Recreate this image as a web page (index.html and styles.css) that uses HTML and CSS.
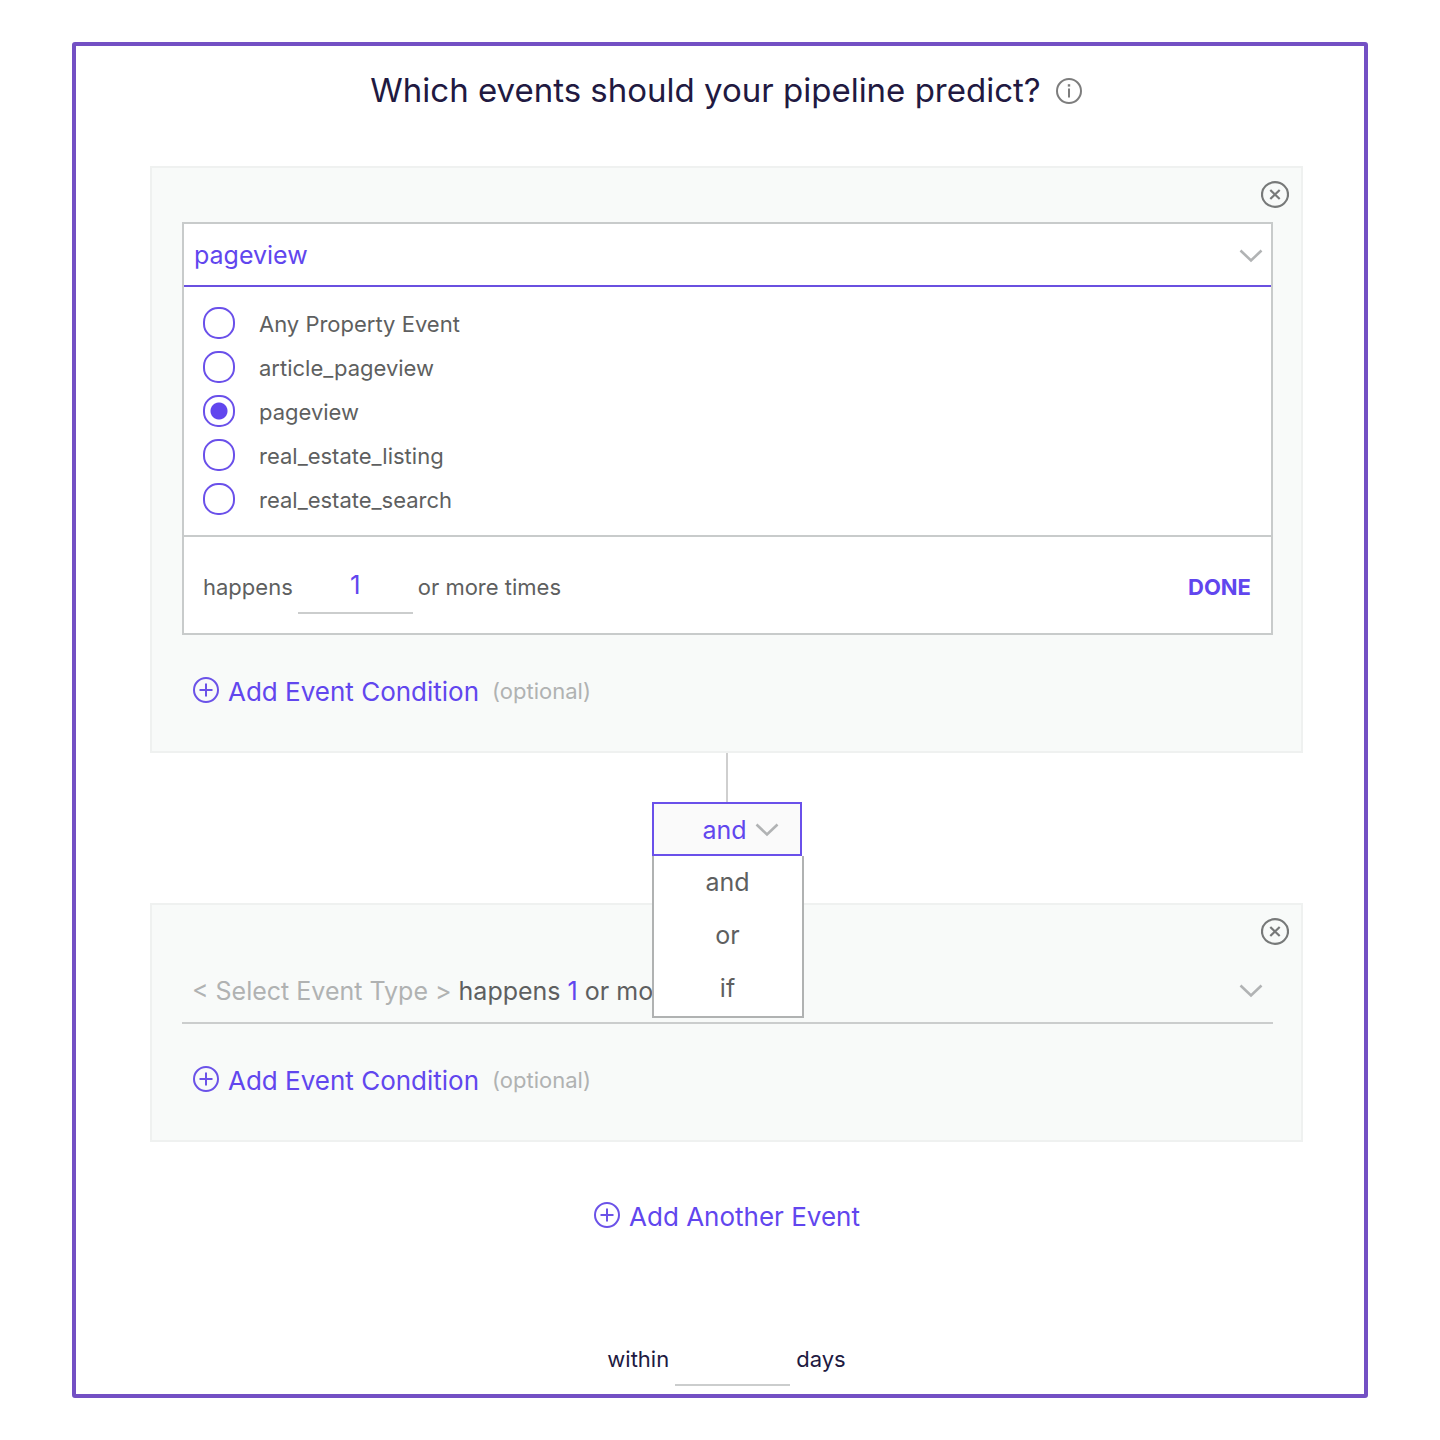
FILE: index.html
```
<!DOCTYPE html>
<html lang="en">
<head>
    <meta charset="UTF-8">
    <meta name="viewport" content="width=device-width, initial-scale=1.0">
    <title>Pipeline Events</title>
    <link rel="stylesheet" href="styles.css">
</head>
<body>
    <main class="frame">
        <div class="title-row">
            <h1>Which events should your pipeline predict?</h1>
            <button class="icon-btn" type="button" aria-label="More info">
                <svg width="28" height="28" viewBox="0 0 28 28" fill="none" stroke="#7d7d7d">
                    <circle cx="14" cy="15" r="12" stroke-width="2"/>
                    <path d="M14 12.5V21.5" stroke-width="2"/>
                    <path d="M14 8.2V10.6" stroke-width="2.4"/>
                </svg>
            </button>
        </div>

        <section class="card">
            <div class="card-head">
                <button class="icon-btn" type="button" aria-label="Remove event">
                    <svg width="28" height="28" viewBox="0 0 28 28" fill="none" stroke="#777979" stroke-width="2.2">
                        <ellipse cx="14" cy="14.5" rx="13" ry="12.3"/>
                        <path d="M9.3 10L18.7 19M18.7 10L9.3 19"/>
                    </svg>
                </button>
            </div>
            <div class="card-body">
                <div class="picker">
                    <div class="select-wrap">
                        <select class="event-select" aria-label="Event type">
                            <option>Any Property Event</option>
                            <option>article_pageview</option>
                            <option selected>pageview</option>
                            <option>real_estate_listing</option>
                            <option>real_estate_search</option>
                        </select>
                        <svg class="chevron" width="24" height="14" viewBox="0 0 24 14" fill="none" stroke="#b1b3b4" stroke-width="2.6">
                            <path d="M1.5 1.5L12 11.5L22.5 1.5"/>
                        </svg>
                    </div>
                    <div class="options">
                        <label class="option"><input type="radio" name="event">Any Property Event</label>
                        <label class="option"><input type="radio" name="event">article_pageview</label>
                        <label class="option"><input type="radio" name="event" checked>pageview</label>
                        <label class="option"><input type="radio" name="event">real_estate_listing</label>
                        <label class="option"><input type="radio" name="event">real_estate_search</label>
                    </div>
                    <div class="picker-footer">
                        <label for="times">happens</label>
                        <input class="number-input" id="times" type="text" inputmode="numeric" value="1">
                        <span>or more times</span>
                        <button class="done-btn" type="button">DONE</button>
                    </div>
                </div>
                <div class="add-row">
                    <button class="add-btn" type="button">
                        <svg width="28" height="28" viewBox="0 0 28 28" fill="none" stroke="#6b52e8" stroke-width="2">
                            <circle cx="14" cy="14" r="12"/>
                            <path d="M14 7.5V20.5M7.5 14H20.5"/>
                        </svg>
                        Add Event Condition
                    </button>
                    <span class="optional">(optional)</span>
                </div>
            </div>
        </section>

        <div class="connector">
            <div class="operator">
                <button class="operator-btn" type="button" aria-haspopup="listbox" aria-expanded="true">
                    and
                    <svg width="24" height="14" viewBox="0 0 24 14" fill="none" stroke="#b1b3b4" stroke-width="2.6">
                        <path d="M1.5 1.5L12 11.5L22.5 1.5"/>
                    </svg>
                </button>
                <ul class="operator-menu" role="listbox" aria-label="Operator">
                    <li role="option" aria-selected="true">and</li>
                    <li role="option" aria-selected="false">or</li>
                    <li role="option" aria-selected="false">if</li>
                </ul>
            </div>
        </div>

        <section class="card">
            <div class="card-head">
                <button class="icon-btn" type="button" aria-label="Remove event">
                    <svg width="28" height="28" viewBox="0 0 28 28" fill="none" stroke="#777979" stroke-width="2.2">
                        <ellipse cx="14" cy="14.5" rx="13" ry="12.3"/>
                        <path d="M9.3 10L18.7 19M18.7 10L9.3 19"/>
                    </svg>
                </button>
            </div>
            <div class="card-body">
                <button class="event-field" type="button" aria-haspopup="listbox">
                    <span><span class="placeholder">&lt; Select Event Type &gt;</span> happens <span class="count">1</span> or more times</span>
                    <svg width="24" height="14" viewBox="0 0 24 14" fill="none" stroke="#b1b3b4" stroke-width="2.6">
                        <path d="M1.5 1.5L12 11.5L22.5 1.5"/>
                    </svg>
                </button>
                <div class="add-row">
                    <button class="add-btn" type="button">
                        <svg width="28" height="28" viewBox="0 0 28 28" fill="none" stroke="#6b52e8" stroke-width="2">
                            <circle cx="14" cy="14" r="12"/>
                            <path d="M14 7.5V20.5M7.5 14H20.5"/>
                        </svg>
                        Add Event Condition
                    </button>
                    <span class="optional">(optional)</span>
                </div>
            </div>
        </section>

        <div class="add-another">
            <button class="add-btn" type="button">
                <svg width="28" height="28" viewBox="0 0 28 28" fill="none" stroke="#6b52e8" stroke-width="2">
                    <circle cx="14" cy="14" r="12"/>
                    <path d="M14 7.5V20.5M7.5 14H20.5"/>
                </svg>
                Add Another Event
            </button>
        </div>

        <div class="within">
            <label for="days">within</label>
            <input class="number-input" id="days" type="text" inputmode="numeric">
            <span>days</span>
        </div>
    </main>
</body>
</html>
```
FILE: styles.css
```
* {
    box-sizing: border-box;
}
body {
    margin: 0;
    background-color: #fff;
    color: #5e5f60;
    font-family: Inter, "Liberation Sans", sans-serif;
    font-size: 22px;
}
button, input, select {
    font-family: inherit;
}
button {
    padding: 0;
    border: none;
    background: none;
    color: inherit;
    cursor: pointer;
}
svg {
    display: block;
    flex-shrink: 0;
}
.frame {
    margin: 42px 5%;
    padding: 24px 61px 4px 74px;
    border: 4px solid #7350c4;
    border-radius: 3px;
}
.title-row {
    display: flex;
    justify-content: center;
    align-items: center;
    gap: 14px;
    margin-bottom: 56px;
}
h1 {
    margin: 0;
    color: #211941;
    font-size: 33px;
    font-weight: 400;
    line-height: 40px;
}

/* event cards */
.card {
    border: 2px solid #eff1f0;
    background-color: #f8faf9;
}
.card-head {
    display: flex;
    justify-content: flex-end;
    padding: 12px 12px 14px;
}
.card-body {
    padding: 0 28px 42px 30px;
}
.picker {
    border: 2px solid #c8cbcb;
    background-color: #fff;
}
.select-wrap {
    position: relative;
}
.event-select {
    display: block;
    width: 100%;
    height: 63px;
    padding: 0 10px;
    border: none;
    border-bottom: 2px solid #6a50e0;
    border-radius: 0;
    background-color: #fff;
    color: #6146ee;
    font-size: 25px;
    appearance: none;
}
.chevron {
    position: absolute;
    top: 25px;
    right: 8px;
    pointer-events: none;
}
.options {
    padding: 14px 19px;
}
.option {
    display: flex;
    align-items: center;
    gap: 24px;
    height: 44px;
    padding-top: 2px;
}
.option input {
    width: 32px;
    height: 32px;
    margin: 0 0 2px;
    border: 2px solid #6a50ea;
    border-radius: 15px;
    background-color: #fff;
    appearance: none;
}
.option input:checked {
    background-image: radial-gradient(circle, #6146ee 8px, transparent 9px);
}
.picker-footer {
    display: flex;
    align-items: center;
    gap: 5px;
    height: 98px;
    padding: 4px 20px 0 19px;
    border-top: 2px solid #c8cbcb;
}
.number-input {
    width: 115px;
    height: 58px;
    margin: 0 0 4px;
    padding: 0;
    border: none;
    border-bottom: 2px solid #cbcdcd;
    background-color: transparent;
    color: #6146ee;
    font-size: 26px;
    text-align: center;
}
.done-btn {
    margin-left: auto;
    color: #6146ee;
    font-size: 22px;
    font-weight: 700;
}
.add-row {
    display: flex;
    align-items: center;
    gap: 13px;
    height: 36px;
    margin-top: 38px;
    padding-left: 10px;
}
.add-btn {
    display: flex;
    align-items: center;
    gap: 8px;
    color: #6146ee;
    font-size: 26px;
}
.add-btn svg {
    margin-bottom: 2px;
}
.optional {
    color: #b0b2b2;
}
.event-field {
    display: flex;
    justify-content: space-between;
    align-items: center;
    width: 100%;
    height: 65px;
    padding: 0 10px;
    border-bottom: 2px solid #cbcdcd;
    font-size: 25px;
}
.placeholder {
    color: #b0b2b2;
}
.count {
    color: #6146ee;
}

/* operator between two cards */
.connector {
    display: flex;
    flex-direction: column;
    align-items: center;
    padding-bottom: 47px;
}
.connector::before {
    content: "";
    width: 2px;
    height: 49px;
    background-color: #cfcfcf;
}
.operator {
    position: relative;
}
.operator-btn {
    display: flex;
    justify-content: flex-end;
    align-items: center;
    gap: 8px;
    width: 150px;
    height: 54px;
    padding: 2px 21px 0 0;
    border: 2px solid #6a50ea;
    background-color: #fafafa;
    color: #6146ee;
    font-size: 25px;
}
.operator-menu {
    position: absolute;
    top: 54px;
    left: 0;
    width: 152px;
    margin: 0;
    padding: 0 0 1px;
    border: 2px solid #b0b2b2;
    border-top: none;
    background-color: #fff;
    font-size: 25px;
    line-height: 53px;
    list-style: none;
    text-align: center;
}

.add-another {
    display: flex;
    justify-content: center;
    align-items: center;
    height: 36px;
    margin: 56px 0 94px;
}
.within {
    display: flex;
    justify-content: center;
    align-items: center;
    gap: 6px;
    color: #211941;
}
```
